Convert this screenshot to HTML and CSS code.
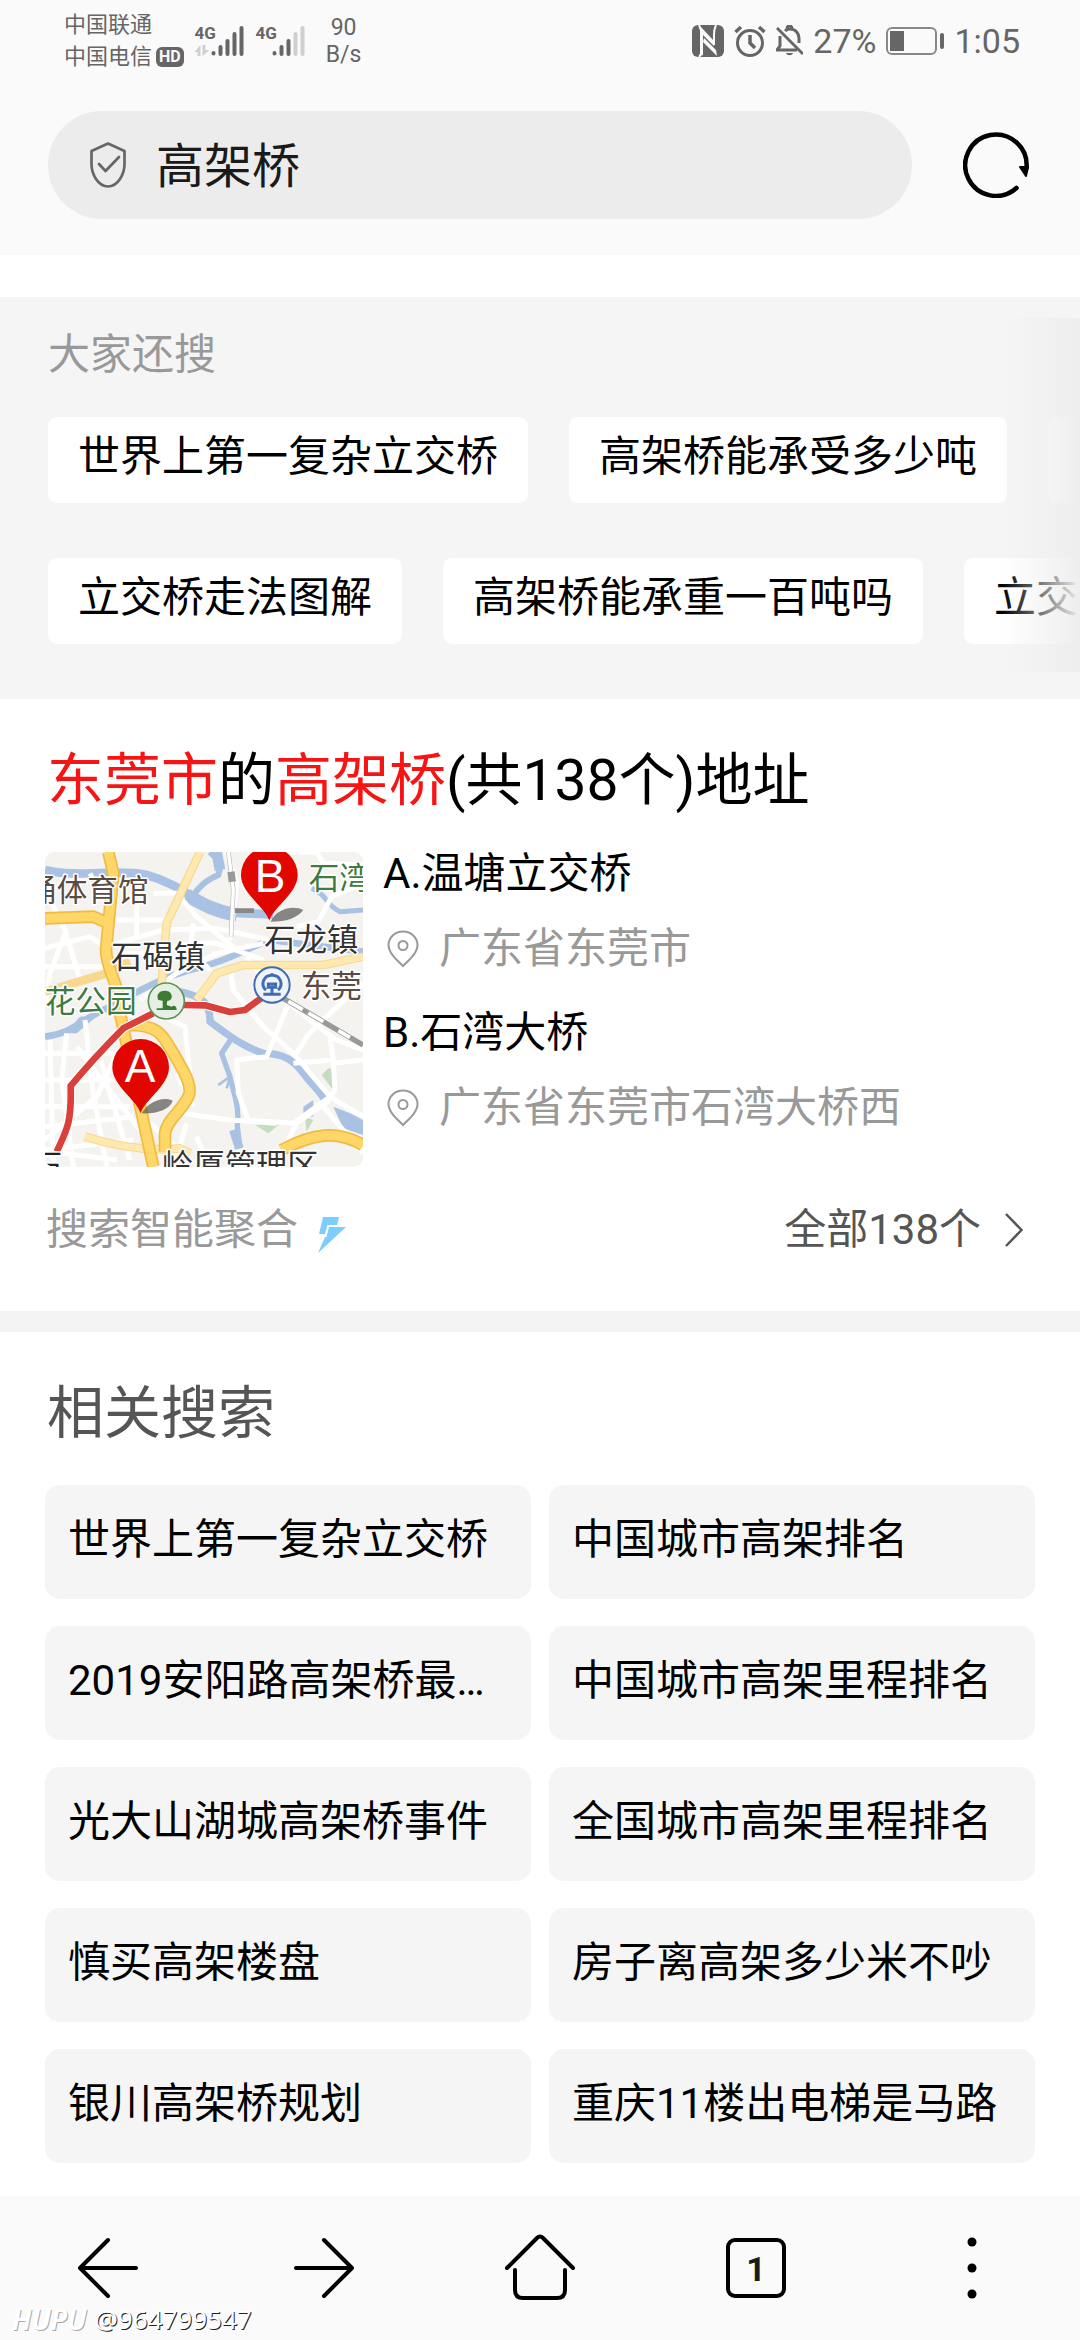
FILE: index.html
```html
<!DOCTYPE html>
<html lang="zh-CN">
<head>
<meta charset="utf-8">
<meta name="viewport" content="width=device-width, initial-scale=1">
<title>高架桥</title>
<link rel="stylesheet" href="styles.css">
</head>
<body>
<header class="header">
  <div class="status">
    <div class="status-left">
      <div class="carriers">
        <div>中国联通</div>
        <div class="carrier-hd">中国电信<span class="hd">HD</span></div>
      </div>
      <svg class="signal" viewBox="0 0 50 32" aria-hidden="true">
        <text x="0" y="14" class="net">4G</text>
        <path d="M0 27 L6 20 V31 H3 V27Z M8 20 H11 V25 H15 L8 31Z" fill="#cfcfcf"/>
        <g stroke="#666" stroke-width="4" stroke-linecap="round"><path d="M19 28V28.500M26 22V29M33 16V29M40 9V29M47 3V29"/></g>
      </svg>
      <svg class="signal" viewBox="0 0 50 32" aria-hidden="true">
        <text x="0" y="14" class="net">4G</text>
        <g stroke="#666" stroke-width="4" stroke-linecap="round"><path d="M19 28V28.500M26 22V29M33 16V29"/><path d="M40 9V29M47 3V29" stroke="#cfcfcf"/></g>
      </svg>
      <div class="speed"><div>90</div><div>B/s</div></div>
    </div>
    <div class="status-right">
      <svg width="32" height="32" viewBox="0 0 32 32" aria-hidden="true">
        <rect x="0" y="0" width="32" height="32" rx="6" fill="#666"/>
        <path d="M7 0 C9 4 10 6 10 12 V24 C10 28 9 30 7 32 M24 0 C22 4 22 6 22 10 V20" fill="none" stroke="#fafafa" stroke-width="2"/>
        <path d="M8 1 L22 16 V21 L11 10 V30 L8 31Z" fill="#fafafa"/>
        <path d="M11 17 L25 31 L24 25 L12 13Z" fill="#fafafa"/>
      </svg>
      <svg width="32" height="32" viewBox="0 0 32 32" fill="none" stroke="#666" aria-hidden="true">
        <circle cx="16" cy="18" r="12.500" stroke-width="3"/>
        <path d="M1.500 7 L7 2 M25 2 L30.500 7" stroke-width="3.500"/>
        <path d="M16 10 V18 L21 23" stroke-width="3.500"/>
      </svg>
      <svg width="27" height="32" viewBox="0 0 27 32" fill="none" stroke="#666" aria-hidden="true">
        <path d="M4 11 V21 L1 25 H21 M9 6 C11 4 12 4 14 4 C20 4 23 9 23 13 V18" stroke-width="3"/>
        <path d="M11 4 C11 0 16 0 16 4" stroke-width="3"/>
        <path d="M1 3 L27 29" stroke-width="3"/>
        <path d="M10 28 H17 C16 31 11 31 10 28Z" fill="#666" stroke="none"/>
      </svg>
      <span class="clock">27%</span>
      <svg width="58" height="28" viewBox="0 0 58 28" aria-hidden="true">
        <rect x="1" y="1" width="49" height="26" rx="5" fill="none" stroke="#888" stroke-width="2"/>
        <rect x="4" y="4" width="14" height="20" fill="#666"/>
        <rect x="54" y="6" width="4" height="16" rx="2" fill="#666"/>
      </svg>
      <span class="clock">1:05</span>
    </div>
  </div>
  <form class="search">
    <label class="search-box">
      <svg width="36" height="46" viewBox="0 0 36 46" fill="none" stroke="#666" stroke-width="2.700" stroke-linejoin="round" stroke-linecap="round" aria-label="安全">
        <path d="M18 1.500 L34.500 9 V22 C34.500 32 28 44.500 18 44.500 C8 44.500 1.500 32 1.500 22 V9Z"/>
        <path d="M9 22 L15.500 29 L29 15"/>
      </svg>
      <input class="search-input" type="text" value="高架桥" aria-label="搜索">
    </label>
    <button class="icon-btn" type="button" aria-label="刷新">
      <svg width="66" height="66" viewBox="0 0 66 66" aria-hidden="true">
        <path d="M53.500 56 A30.700 30.700 0 1 1 63.500 36" fill="none" stroke="#000" stroke-width="4.500" stroke-linecap="round"/>
        <path d="M57 35 H65 L63 44Z" stroke="#000" stroke-width="2" stroke-linejoin="round"/>
      </svg>
    </button>
  </form>
</header>

<main class="content">
  <section class="suggest">
    <h2 class="suggest-title">大家还搜</h2>
    <div class="chip-rows">
      <div class="chip-row">
        <a class="chip" href="#">世界上第一复杂立交桥</a>
        <a class="chip" href="#">高架桥能承受多少吨</a>
        <a class="chip" href="#">高架桥</a>
      </div>
      <div class="chip-row">
        <a class="chip" href="#">立交桥走法图解</a>
        <a class="chip" href="#">高架桥能承重一百吨吗</a>
        <a class="chip" href="#">立交桥</a>
      </div>
    </div>
    <div class="suggest-fade"></div>
  </section>

  <section class="card">
    <h2 class="card-title"><em>东莞市</em>的<em>高架桥</em>(共138个)地址</h2>
    <div class="places">
      <svg class="map" viewBox="45 36 954 944" role="img" aria-label="地图">
        <rect x="45" y="36" width="954" height="944" fill="#f4f3ef"/>
        <g fill="none" stroke="#a9c2e3" stroke-linejoin="round">
          <path d="M45 90 C150 115 250 85 350 105 C440 130 480 170 540 200 S680 215 730 225" stroke-width="26"/>
          <path d="M470 165 C520 195 560 215 620 225" stroke-width="40"/>
          <path d="M540 36 C560 60 580 60 565 105 C530 120 520 130 495 158" stroke-width="18"/>
          <path d="M560 36 L570 90" stroke-width="32"/>
          <path d="M45 590 C130 580 150 540 230 505 C330 450 400 410 500 385 C600 360 640 330 720 300 L999 335" stroke-width="20"/>
          <path d="M450 455 C520 470 540 490 540 545 C600 590 640 620 700 640 C760 640 790 660 820 700 S860 740 885 780" stroke-width="22"/>
          <path d="M605 595 L575 640 L600 710 C610 760 630 800 622 860 L630 925" stroke-width="16"/>
          <path d="M610 870 L628 925" stroke-width="26"/>
          <path d="M565 735 L600 710 L590 745" stroke-width="8"/>
          <path d="M845 145 C900 170 880 190 930 215 L999 210" stroke-width="15"/>
        </g>
        <path d="M910 800 L960 820 L999 840 V885 L940 865Z M820 800 L850 780 V830 L820 830Z M105 580 L150 530 L205 525 L140 580Z" fill="#a9c2e3"/>
        <path d="M875 705 L895 685 L915 690 V740 L905 745Z M675 855 L765 840 L715 880Z M825 830 L850 840 L830 875Z" fill="#c6dcc0"/>
        <g fill="none" stroke="#fff" stroke-width="15" stroke-linejoin="round">
          <path d="M60 180 L105 270 L150 420 M45 325 L180 290 L225 320 M45 380 L220 380 M110 270 L60 400 L45 500"/>
          <path d="M260 240 H430 M320 190 V290 M180 100 L210 160 M260 310 L400 270 L560 265 L720 300 M370 160 L440 160 L500 230 L620 330"/>
          <path d="M280 340 C380 350 450 300 560 310 L700 360 M490 250 L480 330 L540 390 M330 480 L440 400 L560 340 L700 310"/>
          <path d="M590 36 L620 130 L600 300 M700 36 L860 36 L880 70 L999 75 M999 130 L905 170 L865 245 L800 260"/>
          <path d="M600 380 L610 450 L700 560 L790 640 L900 770 L999 830 M650 350 L720 440 L850 550 L920 600 L999 630"/>
          <path d="M999 430 L900 520 L830 590 L800 640 M780 480 L710 650 L620 660 L625 760 L655 840 L790 850 L900 770"/>
          <path d="M900 590 L910 660 L790 670 M999 660 L910 670 L915 750 L880 800 L999 940 M900 780 L800 850 L770 910"/>
          <path d="M400 530 L465 560 L475 660 L480 700 M440 700 L490 800 M420 815 L600 840 L740 850"/>
          <path d="M45 640 H260 M45 720 H250 M45 800 H300 M45 860 L310 830 M45 930 L310 900"/>
          <path d="M110 580 L95 720 L130 980 M165 540 L190 760 L230 980 M210 650 L240 760 L300 960 M60 600 L70 980"/>
          <path d="M45 900 L200 770 L260 640 M140 620 L330 870 M100 940 L260 960 M470 850 L430 980 M520 940 L500 890 M350 840 L480 960"/>
        </g>
        <g fill="none" stroke-linejoin="round">
          <path d="M510 36 L410 250 L395 430" stroke="#f6d98f" stroke-width="26"/>
          <path d="M510 36 L410 250 L395 430" stroke="#ffe9b0" stroke-width="19"/>
          <path d="M45 455 L230 400 L300 365 M165 890 C260 920 350 935 450 925 L480 940 M500 480 L560 400 L640 375 L880 375 L999 350" stroke="#f6d98f" stroke-width="26"/>
          <path d="M165 890 C260 920 350 935 450 925 L480 940 M500 480 L560 400 L640 375 L880 375 L999 350" stroke="#ffe9b0" stroke-width="20"/>
          <path d="M235 36 L250 100 L228 330 C230 400 275 440 270 520 L370 980 M45 235 L190 230 L235 250 M300 555 C390 555 400 590 430 640 C460 690 490 740 475 770 C450 820 410 840 405 880 V935 M755 930 C850 880 920 870 999 915" stroke="#efbb45" stroke-width="38"/>
          <path d="M235 36 L250 100 L228 330 C230 400 275 440 270 520 L370 980 M45 235 L190 230 L235 250 M300 555 C390 555 400 590 430 640 C460 690 490 740 475 770 C450 820 410 840 405 880 V935 M755 930 C850 880 920 870 999 915" stroke="#ffd668" stroke-width="28"/>
          <path d="M595 36 L610 150 L603 290" stroke="#bbb" stroke-width="14"/>
          <path d="M595 36 L610 150 L603 290" stroke="#fff" stroke-width="10"/>
          <path d="M603 95 L607 125" stroke="#999" stroke-width="22"/>
          <path d="M615 212 H672" stroke="#888" stroke-width="14"/>
          <path d="M760 475 L999 615" stroke="#999" stroke-width="16"/>
          <path d="M775 484 L818 509 M835 519 L880 545 M925 572 L960 592" stroke="#fff" stroke-width="11"/>
          <path d="M460 495 L525 496 L600 516 L645 510 L700 470 M370 520 L280 565 C220 625 170 680 122 738 C125 850 110 870 80 935" stroke="#fff" stroke-width="26"/>
          <path d="M460 495 L525 496 L600 516 L645 510 L700 470 M370 520 L280 565 C220 625 170 680 122 738 C125 850 110 870 80 935" stroke="#d9403c" stroke-width="20"/>
        </g>
        <circle cx="409" cy="483" r="54" fill="#e6efe3" stroke="#5f9156" stroke-width="5"/>
        <path d="M385 480 C375 460 395 450 410 453 C430 455 430 485 412 482 L410 495 L425 500 C430 495 440 497 440 510 H380 V505 H398 V482Z" fill="#3f7a35"/>
        <circle cx="726" cy="435" r="53" fill="#f0f4fa" stroke="#3f6db0" stroke-width="6"/>
        <path d="M708 450 C690 435 700 406 726 406 C752 406 762 435 744 450 M700 463 H752 M726 400 V408 M726 445 V462 M715 432 H737 V442 H715Z" fill="none" stroke="#3f6db0" stroke-width="9"/>
        <g class="map-text">
          <text x="-12" y="184" fill="#5b4b43" class="map-md">涌体育馆</text>
          <text x="243" y="385" fill="#333">石碣镇</text>
          <text x="703" y="332" fill="#333">石龙镇</text>
          <text x="836" y="146" fill="#3f7a40" class="map-md">石湾</text>
          <text x="812" y="470" fill="#5b4b43" class="map-md">东莞</text>
          <text x="44" y="515" fill="#3f7a40" class="map-md">花公园</text>
          <text x="396" y="1011" fill="#333">岭厦管理区</text>
          <text x="3" y="1011" fill="#222">石</text>
        </g>
        <g>
          <path d="M722 245 C740 205 790 195 820 210 C800 235 770 245 722 245Z M335 820 C355 785 400 768 428 782 C420 808 380 822 335 820Z" fill="#555" opacity=".7"/>
          <path d="M718 242 C705 200 633 160 633 105 A85 85 0 0 1 803 105 C803 160 731 200 718 242Z" fill="#e10600"/>
          <path d="M332 820 C319 778 247 738 247 682 A85 85 0 0 1 417 682 C417 738 345 778 332 820Z" fill="#e10600"/>
          <text x="720" y="155" class="pin">B</text>
          <text x="330" y="727" class="pin">A</text>
        </g>
      </svg>
      <div class="place-list">
        <a class="place" href="#">
          <span class="place-name">A.温塘立交桥</span>
          <span class="place-addr"><svg class="pin-icon" viewBox="0 0 32 38" aria-hidden="true"><path d="M16 36 C10 30 1.500 23 1.500 15 A14.500 13.500 0 0 1 30.500 15 C30.500 23 22 30 16 36Z"/><circle cx="16" cy="15.500" r="4.500"/></svg>广东省东莞市</span>
        </a>
        <a class="place" href="#">
          <span class="place-name">B.石湾大桥</span>
          <span class="place-addr"><svg class="pin-icon" viewBox="0 0 32 38" aria-hidden="true"><path d="M16 36 C10 30 1.500 23 1.500 15 A14.500 13.500 0 0 1 30.500 15 C30.500 23 22 30 16 36Z"/><circle cx="16" cy="15.500" r="4.500"/></svg>广东省东莞市石湾大桥西</span>
        </a>
      </div>
    </div>
    <div class="card-foot">
      <span class="source">搜索智能聚合
        <svg class="bolt" width="28" height="36" viewBox="0 0 28 36" fill="#7cceff" aria-hidden="true"><path d="M5 0 H21 L19 8 H9.500 L7 17 H1Z"/><path d="M11 10 H28 L0 36 L7 20 H8.500Z"/></svg>
      </span>
      <a class="more" href="#">全部138个
        <svg width="18" height="34" viewBox="0 0 18 34" fill="none" stroke="#555" stroke-width="2.500" aria-hidden="true"><path d="M1 1 L16.500 17 L1 33"/></svg>
      </a>
    </div>
  </section>

  <section class="related">
    <h2 class="related-title">相关搜索</h2>
    <div class="related-grid">
      <a class="cell" href="#">世界上第一复杂立交桥</a>
      <a class="cell" href="#">中国城市高架排名</a>
      <a class="cell" href="#">2019安阳路高架桥最新消息</a>
      <a class="cell" href="#">中国城市高架里程排名</a>
      <a class="cell" href="#">光大山湖城高架桥事件</a>
      <a class="cell" href="#">全国城市高架里程排名</a>
      <a class="cell" href="#">慎买高架楼盘</a>
      <a class="cell" href="#">房子离高架多少米不吵</a>
      <a class="cell" href="#">银川高架桥规划</a>
      <a class="cell" href="#">重庆11楼出电梯是马路</a>
    </div>
  </section>
</main>

<nav class="toolbar">
  <button class="tool" type="button" aria-label="后退">
    <svg width="72" height="72" viewBox="0 0 72 72"><path d="M64 36 H8 M36 8 L8 36 L36 64"/></svg>
  </button>
  <button class="tool" type="button" aria-label="前进">
    <svg width="72" height="72" viewBox="0 0 72 72"><path d="M8 36 H64 M36 8 L64 36 L36 64"/></svg>
  </button>
  <button class="tool" type="button" aria-label="主页">
    <svg width="72" height="72" viewBox="0 0 72 72"><path d="M3 36 L33 6 Q36 3 39 6 L69 36 M11 38 V58 Q11 66 19 66 H53 Q61 66 61 58 V38"/></svg>
  </button>
  <button class="tool" type="button" aria-label="标签页"><span class="tab-count">1</span></button>
  <button class="tool" type="button" aria-label="更多">
    <svg width="72" height="72" viewBox="0 0 72 72"><g class="dots"><circle cx="36" cy="10" r="4.500"/><circle cx="36" cy="36" r="4.500"/><circle cx="36" cy="62" r="4.500"/></g></svg>
  </button>
  <div class="watermark"><span class="brand">HUPU</span><span>@964799547</span></div>
</nav>
</body>
</html>
```
FILE: styles.css
```css
* {
  box-sizing: border-box;
}

body {
  margin: 0;
  min-height: 100vh;
  display: flex;
  flex-direction: column;
  background: #fff;
  color: #000;
  font-family: Roboto, "Noto Sans CJK SC", sans-serif;
  font-size: 42px;
  line-height: 60px;
}

a {
  color: inherit;
  text-decoration: none;
}

h2 {
  margin: 0;
  font-weight: 400;
}

button {
  padding: 0;
  border: 0;
  background: none;
  font: inherit;
  color: inherit;
}

svg {
  display: block;
  flex: none;
}

/* Status bar and address bar */
.header {
  background: #fafafa;
  padding-bottom: 36px;
}

.status {
  display: flex;
  justify-content: space-between;
  align-items: center;
  height: 82px;
  padding: 0 60px 0 64px;
  color: #666;
}

.status-left,
.status-right {
  display: flex;
  align-items: center;
  gap: 10px;
}

.carriers {
  font-size: 22px;
  line-height: 32px;
}

.carrier-hd {
  display: flex;
  align-items: center;
  gap: 4px;
}

.hd {
  padding: 0 3px;
  border-radius: 6px;
  background: #666;
  color: #fafafa;
  font-size: 16px;
  line-height: 20px;
  font-weight: 700;
}

.signal {
  width: 51px;
  height: 32px;
}

.net {
  font-family: "Liberation Sans Narrow", Roboto, sans-serif;
  font-size: 17px;
  font-weight: 700;
  fill: #666;
}

.speed {
  padding-left: 10px;
  font-size: 23px;
  line-height: 27px;
  text-align: center;
}

.clock {
  font-size: 34px;
  line-height: 40px;
}

.search {
  display: flex;
  align-items: center;
  gap: 51px;
  padding: 29px 51px 0 48px;
}

.search-box {
  flex: 1;
  min-width: 0;
  display: flex;
  align-items: center;
  gap: 30px;
  height: 108px;
  padding: 0 42px;
  border-radius: 54px;
  background: #ececec;
}

.search-input {
  flex: 1;
  min-width: 0;
  padding: 4px 0 0;
  border: 0;
  outline: 0;
  background: none;
  color: #1a1a1a;
  font: inherit;
  font-size: 48px;
}

/* Suggested searches */
.content {
  flex: 1;
  padding-top: 42px;
}

.suggest {
  position: relative;
  overflow: hidden;
  padding: 28px 0 55px 48px;
  background: #f5f5f5;
}

.suggest-title {
  font-size: 42px;
  color: #999;
}

.chip-rows {
  display: grid;
  gap: 55px;
  margin-top: 32px;
}

.chip-row {
  display: flex;
  gap: 41px;
}

.chip {
  flex: none;
  padding: 10px 30px 16px;
  border-radius: 9px;
  background: #fff;
}

.suggest-fade {
  position: absolute;
  top: 21px;
  right: 0;
  bottom: 27px;
  width: 78px;
  background: linear-gradient(to right, rgba(238, 238, 238, 0), #eee);
}

/* Places card */
.card {
  padding: 42px 45px 51px;
  border-bottom: 21px solid #f4f4f4;
}

.card-title,
.related-title {
  padding-left: 2px;
  font-size: 57px;
  line-height: 80px;
}

.card-title em {
  font-style: normal;
  color: #f71414;
}

.places {
  display: flex;
  align-items: flex-start;
  gap: 20px;
  margin-top: 23px;
}

.map {
  width: 318px;
  margin-top: 8px;
  border-radius: 9px;
}

.map-text {
  font-size: 94px;
  stroke: #fff;
  stroke-width: 9px;
  stroke-linejoin: round;
  paint-order: stroke;
}

.map-md {
  font-size: 92px;
}

.pin {
  font-family: "Liberation Sans", sans-serif;
  font-size: 138px;
  text-anchor: middle;
  fill: #fff;
}

.place-list {
  display: grid;
  gap: 24px;
}

.place {
  display: grid;
  gap: 15px;
}

.place-addr {
  display: flex;
  align-items: center;
  gap: 20px;
  padding-left: 4px;
  color: #999;
}

.pin-icon {
  width: 32px;
  height: 38px;
  fill: none;
  stroke: #999;
  stroke-width: 2px;
}

.card-foot {
  display: flex;
  justify-content: space-between;
  margin-top: 33px;
}

.source,
.more {
  display: flex;
  align-items: center;
}

.source {
  gap: 20px;
  padding-left: 1px;
  color: #999;
}

.bolt {
  margin-top: 10px;
}

.more {
  gap: 24px;
  padding-right: 12px;
  color: #555;
}

/* Related searches */
.related {
  padding: 42px 45px 33px;
}

.related-title {
  color: #555;
}

.related-grid {
  display: grid;
  grid-template-columns: repeat(2, minmax(0, 1fr));
  gap: 27px 18px;
  margin-top: 31px;
}

.cell {
  padding: 25px 23px 29px;
  border-radius: 15px;
  background: #f5f5f5;
  overflow: hidden;
  white-space: nowrap;
  text-overflow: ellipsis;
}

/* Browser toolbar */
.toolbar {
  position: relative;
  display: grid;
  grid-template-columns: repeat(5, 1fr);
  height: 144px;
  background: #fafafa;
}

.tool {
  display: flex;
  align-items: center;
  justify-content: center;
}

.tool svg {
  fill: none;
  stroke: #000;
  stroke-width: 4px;
  stroke-linecap: round;
  stroke-linejoin: round;
}

.tool .dots {
  fill: #000;
  stroke: none;
}

.tab-count {
  width: 60px;
  height: 60px;
  border: 4px solid #000;
  border-radius: 9px;
  color: #1a1a1a;
  font-size: 34px;
  line-height: 54px;
  font-weight: 700;
}

.watermark {
  position: absolute;
  left: 12px;
  bottom: 5px;
  display: flex;
  gap: 8px;
  color: #fff;
  font-family: "Noto Sans", sans-serif;
  font-size: 26px;
  line-height: 32px;
  text-shadow: 1px 1px 0 #222;
}

.brand {
  font-size: 28px;
  font-style: italic;
  font-weight: 600;
  text-shadow: 1px 1px 0 #aaa;
}
```
